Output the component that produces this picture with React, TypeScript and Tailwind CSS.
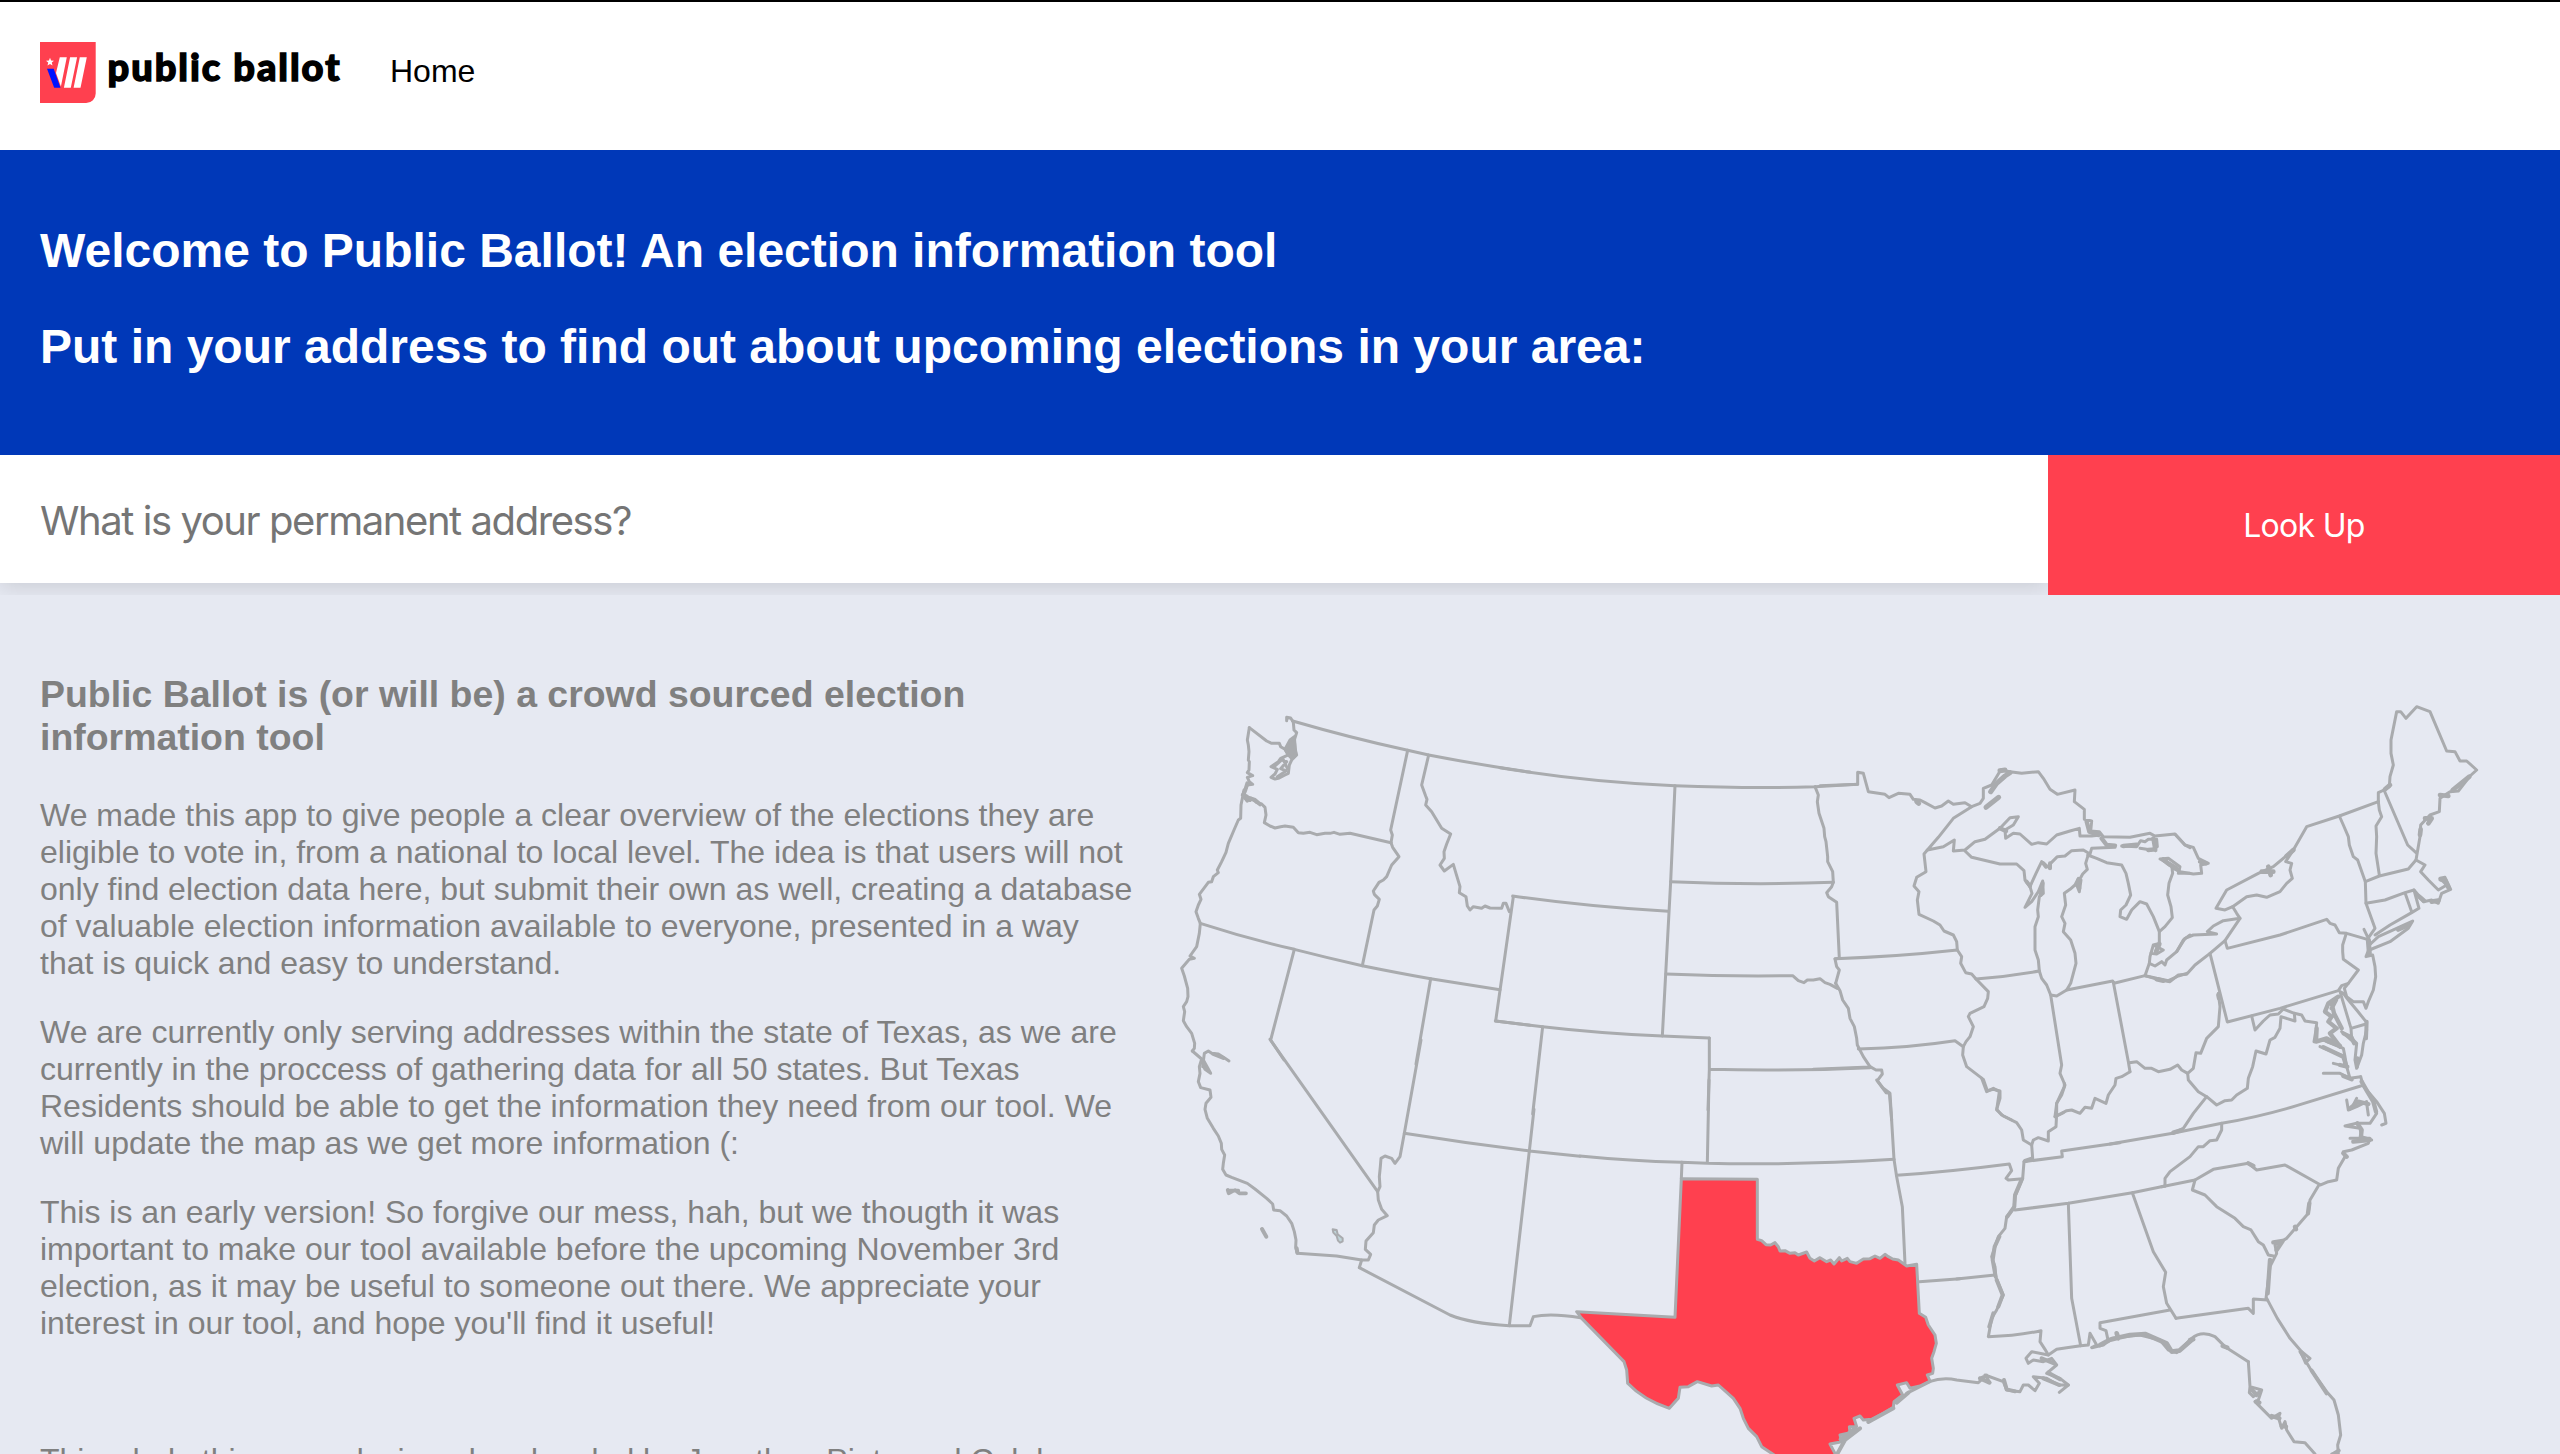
import React from "react";

type Stroke = { d: string; w?: number; fill?: string };
type Sheet = { x: number; y: number; lines: Stroke[] };

const LINE = "#a9abae";
const RED = "#ff404f";

// Each sheet holds one region of the map, drawn at three times its final size.
const sheets: Sheet[] = [
  {
    x: 1160,
    y: 690,
    lines: [
      { d: "M268 113 L262 150 265 165 267 185 265 210 268 215 267 240 262 248 278 257 262 262 268 275 278 283 262 285 255 300 247 315 262 322" },
      { d: "M262 280 L256 300 250 315 262 332 258 318 270 330", w: 12 },
      { d: "M268 113 L320 153 335 160 358 160 362 170 375 178 385 195 362 205 355 215 333 230 352 238 345 252 333 262 345 267 355 265 375 255 385 250 388 225 395 210 410 195 405 175 403 150 410 128 402 120 400 97 392 84 380 82 380 92" },
      { d: "M375 178 L390 150 403 140 407 190 395 205 385 195 Z", fill: LINE },
      { d: "M345 228 L365 210 380 215 362 236 378 243 352 260 M368 205 L382 235" },
      { d: "M398 93 Q570 143 743 181 L806 195 Q960 225 1110 246" },
      { d: "M743 181 L692 420 697 435 693 458" },
      { d: "M255 325 L275 325 290 338 305 342 315 352 318 375 313 398 330 408 345 414 362 410 375 408 400 412 415 428 430 430 450 427 470 434 495 430 510 430 522 427 540 433 570 430 693 458" },
      { d: "M262 322 L285 330 300 343", w: 12 },
      { d: "M252 300 L243 345 242 385 235 390 222 420 205 460 198 487 185 515 172 540 175 548 160 560 155 575 145 577 118 613 123 628 115 645 108 665 115 685 121 700 118 730 110 770 90 798 103 805 88 808 65 835 73 858 83 895 84 920 80 935 70 950 74 965 70 992 80 1010 95 1030 104 1060 103 1075 97 1083" },
      { d: "M693 458 L698 472 717 500 695 525 680 560 670 570 657 577 640 603 643 613 658 628 652 648 642 660 607 827" },
      { d: "M121 700 Q260 745 403 778 Q500 803 607 827 Q720 850 812 866 L1020 899" },
      { d: "M403 778 L332 1050 372 1110 M812 866 L768 1122" },
      { d: "M806 195 L785 285 797 318 801 328 797 345 815 365 845 415 872 432 860 462 852 485 853 505 840 525 853 543 880 523 888 550 900 590 898 608 918 620 922 648 930 660 940 650 965 655 975 648 990 654 1025 655 1030 640 1038 640 1048 665" },
      { d: "M1060 620 L1007 993 1110 1006" },
    ],
  },
  {
    x: 1500,
    y: 740,
    lines: [
      { d: "M38 468 Q260 500 505 514" },
      { d: "M-14 843 L128 860 Q300 880 487 888 L628 894" },
      { d: "M0 83 Q260 126 525 137 Q760 146 945 140 L1073 133" },
      { d: "M525 137 L512 425 487 888" },
      { d: "M512 425 Q760 436 1000 427" },
      { d: "M945 140 L955 165 952 185 957 220 972 265 974 290 978 305 983 350 983 365 998 395 1000 427 995 440 980 458 985 470 1010 487 1018 655 1005 657 1010 680 1018 690 1007 730" },
      { d: "M498 702 Q690 710 878 707 L895 722 912 728 922 720 940 720 960 716 975 728 990 733 1012 745" },
      { d: "M1007 730 L1020 752 1028 780 1045 805 1050 835 1063 860 1070 895 1072 915 1090 950 1110 980" },
      { d: "M628 894 L628 988 Q870 994 1110 983 M628 988 L624 1110" },
      { d: "M128 860 L98 1122" },
    ],
  },
  {
    x: 1820,
    y: 750,
    lines: [
      { d: "M0 107 L113 103 113 67 130 70 145 125 175 130 195 133 207 143 235 130 270 133 280 148 300 150 315 158 345 174 365 168 385 153 400 163 435 158 455 170 480 160 490 145 490 115 515 105 530 80 542 60 570 65 605 70 655 65 670 85 690 118 712 133 765 120 763 155 793 178 793 208 815 213 812 243 838 245 850 260 930 262 990 250 1005 258 1065 252 1095 285 1110 293" },
      { d: "M290 155 L296 160 M512 125 L530 100 555 78 570 68 M540 62 L555 60", w: 15 },
      { d: "M455 170 L400 205 355 262 322 300 370 290 403 270 400 303 435 300 465 275 495 268 540 235 570 203 595 200 580 225 555 240 557 265 580 250 600 252 635 283 655 278 680 282 710 255 750 243 778 235 780 258 815 258 840 255" },
      { d: "M498 172 L536 142", w: 15 },
      { d: "M540 235 L558 243 M800 215 L808 245 835 255 M845 265 L860 285 885 287", w: 13 },
      { d: "M322 300 L312 312 318 365 290 382 282 408 297 425 292 450 297 493 340 513 360 525 372 543 400 555 410 575 412 600" },
      { d: "M45 626 Q230 620 412 600 L425 620 422 640 437 668 455 672 468 687 Q560 680 658 663" },
      { d: "M468 687 L505 725 503 745 492 770 450 790 445 800 460 830 450 860 438 875 430 890 428 915 440 950 490 988 502 1022 520 1018 540 1023 540 1045 530 1078 545 1095 575 1110" },
      { d: "M115 897 Q270 893 405 872 L430 890" },
      { d: "M435 303 L455 322 540 342 590 342 612 362 615 390 630 410" },
      { d: "M630 410 L648 370 665 335 690 355 692 340 712 320 735 318 755 302 790 300 810 312 815 295 885 292" },
      { d: "M630 410 L636 430 615 472 635 455 655 425 668 393 670 430 658 440 653 480 655 500 645 530 645 600 655 630 658 663 665 685 680 705 692 735 710 738 740 720 752 700 768 640 765 610 752 570 730 545 735 520 725 500 737 465 733 430 750 418 765 405 775 385 783 390 778 425 770 405 788 372 802 358 797 340 803 320" },
      { d: "M670 340 L678 350 M690 340 L690 355 M620 395 L630 408 M668 400 L662 435 M775 390 L778 415", w: 12 },
      { d: "M803 315 L830 325 860 338 905 345 918 370 925 400 932 435 918 465 902 480 900 500 920 508 935 480 960 455 980 462 1000 500 1018 545 1035 530 1057 503 1053 470 1043 435 1047 400 1058 370 1055 345 1020 327 1045 325 1080 350 1075 370 1110 370" },
      { d: "M1018 545 L1018 580 1000 585 990 620 988 640 975 677 M1000 585 L1030 600 1010 612 992 610" },
      { d: "M1018 582 L1008 605 M1010 688 L1030 692", w: 14 },
      { d: "M988 640 L1005 648 1025 635 1035 645 1040 630 1070 605 1090 570 1110 555" },
      { d: "M740 720 L878 693 882 700 975 677 1010 685 1045 692 1075 678 1100 670" },
      { d: "M905 288 L950 290 962 272 975 275 985 268 1010 268 1012 290 995 300 960 295" },
      { d: "M910 288 L950 284 M1000 265 L1006 300 M985 300 L1005 298 M1030 328 L1045 340 1070 355", w: 13 },
      { d: "M692 735 L725 945 720 970 735 1005 725 1035 710 1060 705 1100" },
      { d: "M880 697 L925 935 930 965" },
      { d: "M705 1100 L725 1090 740 1082 755 1080 780 1090 795 1072 815 1075 825 1045 858 1060 865 1035 885 1005 888 985 905 980 930 965" },
      { d: "M150 950 L168 960 185 960 187 972 172 992 190 1015 208 1028 215 1110 M-20 958 L150 951" },
    ],
  },
  {
    x: 2130,
    y: 690,
    lines: [
      { d: "M135 433 L165 465 190 472 205 505 235 520 212 525 215 550 190 552 150 545 130 535" },
      { d: "M210 515 L228 520 M100 510 L120 525 145 540", w: 13 },
      { d: "M140 785 L165 745 190 735 260 732 232 725 250 708 280 692 330 685 320 670 308 650 285 660 258 655 290 600 385 550 430 530 490 480 530 410 628 378 745 335" },
      { d: "M395 545 L430 545 M415 530 L422 555 M470 498 L490 480", w: 14 },
      { d: "M330 685 L285 752 240 790 195 825 170 853 145 855 120 875 90 870 45 857" },
      { d: "M308 650 L350 620 380 615 410 622 450 605 470 580 487 565 480 540 485 520 467 515 490 480" },
      { d: "M285 752 L292 775 450 735 590 688 600 700 615 705 628 728 650 730 712 748" },
      { d: "M240 790 L292 996 450 955 625 902 635 887 655 880 685 840 640 808 638 785 638 765 648 733" },
      { d: "M712 748 L718 775 708 800 728 795 735 830 737 860 730 900 715 935 708 955 700 935 670 935 650 920 643 895 655 880" },
      { d: "M628 378 L640 405 655 440 658 465 670 500 683 510 706 575 708 640 735 715 712 748 M702 718 L722 760" },
      { d: "M745 335 L748 360 755 380 738 408 740 440 738 490 748 555" },
      { d: "M706 575 L748 558 835 537 858 510 M762 300 L833 465 858 488 M745 335 L745 308 762 300" },
      { d: "M762 300 L778 290 780 260 790 225 783 190 783 150 800 65 812 65 828 85 860 50 900 65 950 183 975 185 990 213 1010 213 1040 240 1020 258 985 303 960 305 930 325 928 365 900 375 872 405 870 440 862 487 858 510 885 525 872 545 895 570 925 600 950 585 930 565 945 562 962 598 935 610 925 640 905 630 880 635 865 615 852 600" },
      { d: "M765 298 L780 285 M930 315 L955 318 M968 300 L1018 260 M885 385 L905 385 895 400 M932 568 L945 570 955 592 M905 635 L925 632 M868 620 L882 632 M872 418 L870 435", w: 14 },
      { d: "M852 600 L825 608 765 630 708 640 M825 608 L845 665 M852 600 L867 655 845 668 780 705 735 735" },
      { d: "M718 765 L745 740 800 715 848 693 835 715 780 755 718 780" },
      { d: "M805 718 L835 705 M715 750 L718 790", w: 15 },
    ],
  },
  {
    x: 1160,
    y: 1040,
    lines: [
      { d: "M97 33 L125 57 118 80 120 100 115 125 122 143 150 150 153 172 138 190 135 208 142 235 160 265 175 288 184 310 185 328 194 345 190 370 188 388 198 405 215 412 262 430 285 447 320 475 338 492 341 510 360 512 380 528 395 550 403 575 408 600 407 622 412 640 530 648 605 660" },
      { d: "M128 80 L133 40 145 33 155 40 175 42 195 55 207 63 M130 60 L152 100 135 88 125 65" },
      { d: "M160 42 L190 54 M410 625 L412 638", w: 12 },
      { d: "M203 450 L206 460 225 450 238 460 258 460 M205 452 L235 452", w: 11 },
      { d: "M306 567 L319 590", w: 12 },
      { d: "M518 568 L530 570 533 583 548 595 548 604 540 608 534 602 530 588 520 578 Z", fill: "#bfd3d8", w: 6 },
      { d: "M330 -2 L653 455" },
      { d: "M783 0 L733 280 720 350 705 370 695 355 675 348 663 355 661 380 658 410 660 440 653 455 655 480 665 508 682 527 655 540 643 555 640 578 618 603 616 628 632 643 625 660 605 660 598 683" },
      { d: "M1122 208 L1108 333 1048 857 M733 280 Q920 310 1108 333 L1260 349" },
      { d: "M598 683 L870 825 Q930 850 1048 857 L1110 857 1120 830 Q1170 818 1262 833" },
    ],
  },
  {
    x: 1560,
    y: 1080,
    lines: [
      { d: "M447 0 L442 248 M60 228 Q210 243 364 247 L442 250 Q700 256 1002 238 M366 247 L364 296" },
      { d: "M950 0 L978 38 990 40 1002 238 1010 290 1027 380 1035 550" },
      {
        d: "M364 296 L592 298 592 478 605 482 618 494 632 495 645 488 655 500 660 513 675 512 690 520 705 518 715 525 740 516 750 535 763 543 780 533 800 545 812 540 822 552 838 533 845 543 862 535 870 545 890 550 910 537 930 536 945 528 960 535 975 523 985 530 998 537 1015 540 1040 558 1070 553 1078 700 1097 712 1105 735 1125 765 1129 790 1122 815 1115 835 1120 865 1118 880 1102 885 1110 903 1080 918 1050 925 1040 908 1012 915 1028 945 1002 965 1000 982 970 1000 935 1018 910 1020 900 1008 882 1015 890 1040 868 1040 870 1058 840 1065 845 1085 810 1092 830 1130 L650 1130 605 1100 590 1070 565 1045 550 1015 540 985 520 955 475 915 455 918 412 905 385 920 360 922 355 955 328 985 Q250 960 203 910 L200 870 192 845 65 715 50 695 345 712 Z",
        fill: RED,
      },
      { d: "M830 1125 L855 1080 900 1045 M842 1078 L885 1045 M925 1026 L1000 985 M1010 968 L1045 938", w: 12 },
      { d: "M1040 940 L1110 905 M1078 605 L1200 596" },
    ],
  },
  {
    x: 1900,
    y: 1080,
    lines: [
      { d: "M-10 286 Q150 275 328 252 L335 272 318 295 325 300 368 296" },
      { d: "M170 597 L285 585" },
      { d: "M372 245 L487 230 485 213 610 195 660 188" },
      { d: "M345 390 L505 370 697 338 795 318" },
      { d: "M245 -5 L260 35 280 25 298 35 290 90 310 108 350 128 365 150 370 180 395 195 398 235 372 245 368 296 358 320 345 350 342 385 320 410 315 445 295 470 275 530 285 560 287 590 310 645 290 690 275 715 265 770 Q350 768 423 752 L420 785 435 808 445 825" },
      { d: "M375 243 L395 236 M364 300 L345 345 343 380 322 410 M298 470 L284 500 278 540 287 590 M290 600 L308 645 295 680 M280 700 L268 740", w: 12 },
      { d: "M493 10 L493 20 470 70 470 100 468 140 445 155 445 183 415 173 400 180 395 195 M470 108 L490 98" },
      { d: "M505 370 L515 655 542 797 M697 338 L760 515 797 577 790 620 800 670 828 715" },
      { d: "M810 690 L600 728 600 745 618 752 625 785 M828 715 L1045 685 1060 700 1060 657 1103 660" },
      { d: "M885 300 L877 330 915 345 950 380 1005 415 1030 440 1053 450 1075 485 1090 495 1105 525 1120 528" },
      { d: "M1255 318 L1230 360 1225 400 1190 440 1160 475 1125 495 1130 520 1110 560 1105 600 1098 655" },
      { d: "M1120 487 L1148 483 1130 510 M1228 370 L1224 400 M1185 440 L1188 448 M1110 540 L1103 640", w: 13 },
      { d: "M88 905 Q130 890 170 900 L235 908 260 885 240 895 270 908 255 885 310 905 320 930 360 935 370 915 385 915 405 932 418 910 400 890 440 895 475 915 505 915 478 937" },
      { d: "M505 915 L480 895 440 880 470 855 455 835 430 845 400 840 385 850 378 835 395 815 445 825 470 808 500 803 542 797 565 795 570 760 590 795 575 803 610 795 635 775 720 765 780 780 805 810 830 818 875 775 Q905 750 945 770 L975 800 1045 845" },
      { d: "M240 895 L268 908 M312 900 L320 928 345 934 M425 835 L462 850 M430 895 L478 915 M445 878 L480 898", w: 12 },
      { d: "M600 795 L628 780 660 772 690 765 735 762 800 790 815 815 838 812 875 780 M650 760 L655 775", w: 14 },
    ],
  },
  {
    x: 2110,
    y: 950,
    lines: [
      { d: "M58 338 L80 335 105 355 125 355 145 365 180 358 203 345 215 360 233 370" },
      { d: "M325 130 L330 170 325 230 290 265 272 310 258 308 250 355 233 370 235 390 265 425 290 440 320 465 345 452 365 450 380 435 412 415 415 385 428 350 438 303 468 312 480 270 495 262 510 235 513 200 555 213 553 190 520 177" },
      { d: "M425 198 L435 240 460 213 480 195 505 192 520 177 M553 190 L575 195 585 213 620 218 618 240 612 275 640 270 690 290" },
      { d: "M290 440 L250 490 220 535 188 550" },
      { d: "M0 582 L188 550 335 520 Q450 500 560 467 L752 408" },
      { d: "M335 520 L335 540 320 570 300 572 280 590 265 590 240 620 180 665 165 685 165 708" },
      { d: "M155 710 L255 690 310 658 415 640 440 660 525 645 632 705 655 695 680 690 685 655 705 620 700 605 725 600 775 580 780 565 720 565" },
      { d: "M752 380 L760 408 800 455 823 490 828 520 815 525 M785 440 L800 490 780 520 740 520 705 528 750 535 755 560 785 570 M710 450 L715 480 740 470 770 455 M770 460 L775 495 M740 445 L730 465" },
      { d: "M755 395 L772 425 790 455 798 485 M742 520 L755 540 752 568 M730 575 L778 570 M720 475 L745 455 775 462 M415 640 L430 648 M700 610 L710 620 M325 135 L327 145 M190 548 L215 540", w: 13 },
      { d: "M752 380 L720 385 690 370 640 370 M720 385 L710 350 670 340 M710 350 L705 320 630 290 M705 320 L700 295 650 275" },
      { d: "M725 388 L700 378 M712 350 L690 345 M620 235 L618 275 650 265 690 288 M640 292 L700 320 708 345", w: 13 },
      { d: "M685 140 L655 160 645 185 665 200 655 215 680 235 660 250 690 290 M665 160 L672 190 695 235 M678 150 L665 175", w: 13 },
      { d: "M690 125 L723 235 768 222 M723 235 L725 265 740 280 735 330 740 355 755 315 760 280 770 240 768 215 740 180 715 150 700 130 690 125 M695 245 L735 280" },
      { d: "M700 250 L725 262 732 280 M742 325 L741 350 M770 215 L768 265", w: 12 },
    ],
  },
  {
    x: 2190,
    y: 1180,
    lines: [
      { d: "M175 545 L180 620 178 638 190 650 215 630 205 660 195 665 245 715 270 700 265 712 275 745 285 725 290 750 312 785 345 788 375 822 M180 620 L215 630" },
      { d: "M245 708 L268 715 M185 628 L200 645 M275 738 L288 740 M98 498 L112 503 M0 480 L10 478 M198 665 L208 668", w: 13 },
      { d: "M230 355 L262 415 300 475 335 515 360 535 350 545 M330 515 L360 565 410 635 432 660 445 705 452 765 443 795 445 822 425 822" },
      { d: "M335 518 L348 548 M365 572 L410 640 M430 822 L446 812", w: 12 },
    ],
  },
];

function UsMap() {
  return (
    <svg width="1400" height="859" viewBox="1160 595 1400 859" className="block shrink-0" fill="none" strokeLinejoin="round" strokeLinecap="round">
      {sheets.map((s) => (
        <g key={`${s.x}-${s.y}`} transform={`translate(${s.x} ${s.y}) scale(0.33333)`} stroke={LINE}>
          {s.lines.map((l) => (
            <path key={l.d} d={l.d} strokeWidth={l.w ?? 9} fill={l.fill ?? "none"} />
          ))}
        </g>
      ))}
    </svg>
  );
}

function Logo() {
  return (
    <svg width="305" height="62" viewBox="0 0 305 62" className="block">
      <path d="M0 0H55.700V51.5A9.500 9.500 0 0 1 46.200 61H0Z" fill={RED} />
      <path d="M10 15.800l1.100 2.700 2.900.2-2.200 1.900.7 2.900-2.500-1.600-2.500 1.600.7-2.900L6 18.700l2.900-.2z" fill="#fff" />
      <path d="M7 26.800H13.700L20.500 45.800H14.200Z" fill="#0012ff" />
      <path d="M19.800 15.200H26.800L20.900 44.500 16 31ZM30.100 15.200H37.100L30.800 45.800H23.900ZM39.800 15.200H46.800L40.500 45.800H33.600Z" fill="#fff" />
      <text x="67.500" y="39" fontFamily="Lato, sans-serif" fontWeight="900" fontSize="38" textLength="232" lengthAdjust="spacing" fill="#000" stroke="#000" strokeWidth="1.400">
        public ballot
      </text>
    </svg>
  );
}

export default function App() {
  return (
    <div className="flex h-[1454px] w-[2560px] flex-col overflow-hidden bg-[#e6e9f2] font-['Liberation_Sans',Arial,sans-serif]">
      <header className="flex h-[150px] shrink-0 items-start border-t-2 border-black bg-white pl-10 pt-10">
        <Logo />
        <a className="ml-[45px] mt-[11px] text-[32px] leading-[37px] text-black">Home</a>
      </header>

      <section className="h-[305px] shrink-0 bg-[#0038b8] px-10 pt-[73px] text-[48px] font-bold leading-[55px] text-white">
        <h1>Welcome to Public Ballot! An election information tool</h1>
        <h1 className="mt-[41px]">Put in your address to find out about upcoming elections in your area:</h1>
      </section>

      <form className="flex h-[140px] shrink-0 items-start overflow-hidden font-[Inter,sans-serif]">
        <div className="flex h-32 w-[2048px] items-center bg-white pl-10 pt-[3px] text-[40px] tracking-[-1.430px] text-[#757575] shadow-[0_4px_20px_rgba(0,0,0,0.12)]">
          What is your permanent address?
        </div>
        <button type="button" className="relative flex h-[140px] flex-1 items-center justify-center bg-[#ff404f] pt-[2px] text-[32px] tracking-[-0.700px] text-white">
          Look Up
        </button>
      </form>

      <main className="flex flex-1 items-start overflow-hidden">
        <div className="w-[1160px] shrink-0 pl-10 pr-5 pt-[78px] text-[32px] leading-[37px] text-[#808080]">
          <h2 className="text-[37.440px] font-bold leading-[43px]">
            Public Ballot is (or will be) a crowd sourced election information tool
          </h2>
          <p className="mt-[38px]">
            We made this app to give people a clear overview of the elections they are eligible to vote in, from a national to local level. The idea is that users will not only find election data here, but submit their own as well, creating a database of valuable election information available to everyone, presented in a way that is quick and easy to understand.
          </p>
          <p className="mt-8">
            We are currently only serving addresses within the state of Texas, as we are currently in the proccess of gathering data for all 50 states. But Texas Residents should be able to get the information they need from our tool. We will update the map as we get more information (:
          </p>
          <p className="mt-8">
            This is an early version! So forgive our mess, hah, but we thougth it was important to make our tool available before the upcoming November 3rd election, as it may be useful to someone out there. We appreciate your interest in our tool, and hope you'll find it useful!
          </p>
          <p className="mt-[100px] whitespace-nowrap">This whole thing was designed and coded by Jonathan Pinto and Caleb</p>
        </div>
        <UsMap />
      </main>
    </div>
  );
}
